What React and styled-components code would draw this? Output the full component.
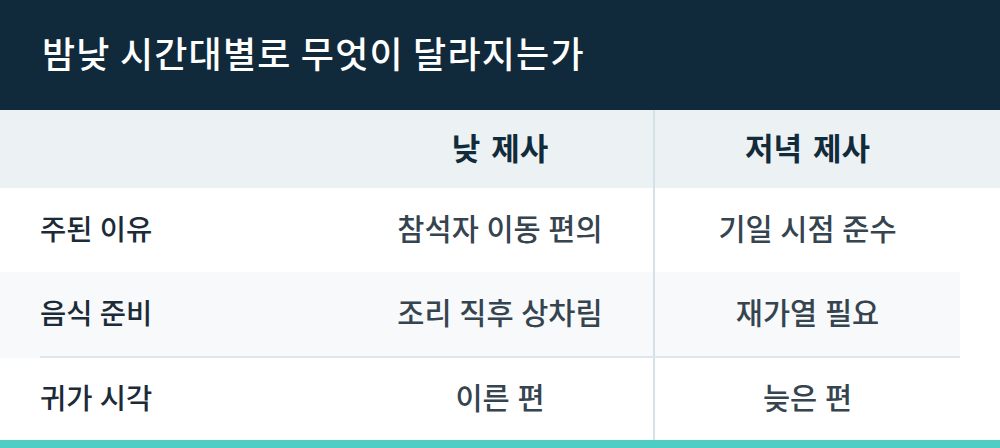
import React from "react";
import styled, { createGlobalStyle } from "styled-components";

const GlobalStyle = createGlobalStyle`
  html, body {
    margin: 0;
    padding: 0;
    background: #ffffff;
  }
  body {
    font-family: "Noto Sans CJK KR", "Noto Sans", sans-serif;
    -webkit-font-smoothing: antialiased;
  }
`;

const Page = styled.div`
  width: 1000px;
  height: 448px;
  overflow: hidden;
  display: flex;
  flex-direction: column;
`;

const TitleBar = styled.header`
  height: 110px;
  background-color: #102a3b;
  display: flex;
  align-items: center;
  padding: 0 40px;
  box-sizing: border-box;
`;

const Title = styled.h1`
  margin: 0;
  margin-left: 2px;
  color: #ffffff;
  font-size: 36px;
  font-weight: 500;
  letter-spacing: 1.2px;
  padding-bottom: 7px;
`;

const Row = styled.div`
  background-color: ${(p) => p.$bg || "#ffffff"};
  padding-left: 40px;
  margin-right: ${(p) => (p.$full ? "0" : "40px")};
`;

const Cells = styled.div`
  display: grid;
  grid-template-columns: 307px 306px 307px;
  height: ${(p) => p.$height}px;
  border-bottom: ${(p) => (p.$line ? "2px solid #e0e7ec" : "none")};
`;

const Cell = styled.div`
  display: flex;
  align-items: center;
  justify-content: ${(p) => (p.$label ? "flex-start" : "center")};
  font-size: ${(p) => (p.$head ? 31 : p.$label ? 28.5 : 29.5)}px;
  font-weight: ${(p) => (p.$head ? 700 : 500)};
  word-spacing: ${(p) => (p.$head ? 4 : 1)}px;
  color: ${(p) => (p.$head ? "#122b3b" : p.$label ? "#1c2b38" : "#35444f")};
  border-left: ${(p) => (p.$divider ? "2px solid #d6e0e7" : "none")};
  padding-bottom: 6px;
  box-sizing: border-box;
`;

const Accent = styled.div`
  height: 8px;
  background-color: #4ecdc4;
`;

const rows = [
  { label: "주된 이유", day: "참석자 이동 편의", night: "기일 시점 준수", bg: "#ffffff", height: 84 },
  { label: "음식 준비", day: "조리 직후 상차림", night: "재가열 필요", bg: "#f7f9fb", height: 84, line: true },
  { label: "귀가 시각", day: "이른 편", night: "늦은 편", bg: "#ffffff", height: 82 },
];

export default function App() {
  return (
    <Page>
      <GlobalStyle />
      <TitleBar>
        <Title>밤낮 시간대별로 무엇이 달라지는가</Title>
      </TitleBar>
      <Row $bg="#ecf1f4" $full>
        <Cells $height={78}>
          <Cell $head />
          <Cell $head>낮 제사</Cell>
          <Cell $head $divider>저녁 제사</Cell>
        </Cells>
      </Row>
      {rows.map((r) => (
        <Row key={r.label} $bg={r.bg} $full={r.bg === "#ffffff"}>
          <Cells $height={r.height} $line={r.line}>
            <Cell $label>{r.label}</Cell>
            <Cell>{r.day}</Cell>
            <Cell $divider>{r.night}</Cell>
          </Cells>
        </Row>
      ))}
      <Accent />
    </Page>
  );
}
